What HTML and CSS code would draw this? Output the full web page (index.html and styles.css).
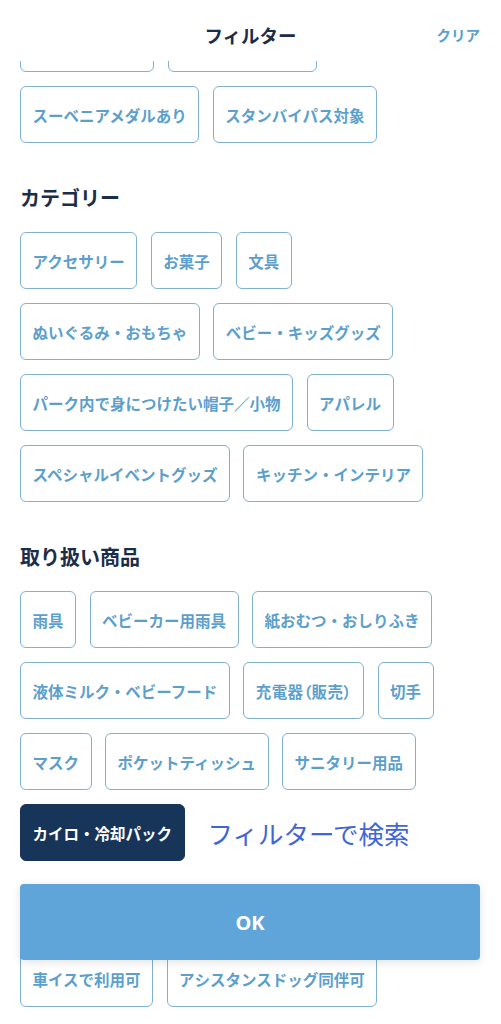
FILE: index.html
```html
<!DOCTYPE html>
<html lang="ja">
<head>
<meta charset="utf-8">
<title>フィルター</title>
<link rel="stylesheet" href="styles.css">
</head>
<body>
<div class="screen">
  <header class="header">
    <h1 class="title">フィルター</h1>
    <button class="clear">クリア</button>
  </header>
  <main class="viewport">
    <div class="content">
      <section class="section">
        <div class="chips">
          <span class="chip chip-blank chip-w1"></span>
          <span class="chip chip-blank chip-w2"></span>
          <span class="chip">スーベニアメダルあり</span>
          <span class="chip">スタンバイパス対象</span>
        </div>
      </section>
      <section class="section">
        <h2 class="heading">カテゴリー</h2>
        <div class="chips">
          <span class="chip">アクセサリー</span>
          <span class="chip">お菓子</span>
          <span class="chip">文具</span>
          <span class="chip">ぬいぐるみ・おもちゃ</span>
          <span class="chip">ベビー・キッズグッズ</span>
          <span class="chip">パーク内で身につけたい帽子／小物</span>
          <span class="chip">アパレル</span>
          <span class="chip">スペシャルイベントグッズ</span>
          <span class="chip">キッチン・インテリア</span>
        </div>
      </section>
      <section class="section">
        <h2 class="heading">取り扱い商品</h2>
        <div class="chips">
          <span class="chip">雨具</span>
          <span class="chip">ベビーカー用雨具</span>
          <span class="chip">紙おむつ・おしりふき</span>
          <span class="chip">液体ミルク・ベビーフード</span>
          <span class="chip chip-palt">充電器（販売）</span>
          <span class="chip">切手</span>
          <span class="chip">マスク</span>
          <span class="chip">ポケットティッシュ</span>
          <span class="chip">サニタリー用品</span>
          <span class="chip chip-active">カイロ・冷却パック</span>
          <span class="search-label">フィルターで検索</span>
        </div>
      </section>
      <section class="section">
        <div class="heading heading-spacer"></div>
        <div class="chips">
          <span class="chip">車イスで利用可</span>
          <span class="chip">アシスタンスドッグ同伴可</span>
        </div>
      </section>
    </div>
  </main>
  <footer class="footer">
    <button class="ok">OK</button>
  </footer>
</div>
</body>
</html>
```

FILE: styles.css
```css
* { box-sizing: border-box; }
html, body {
  margin: 0;
  padding: 0;
  background: #ffffff;
}
body {
  font-family: "Noto Sans CJK JP", "Noto Sans", sans-serif;
  color: #1b2d49;
}
.screen {
  position: relative;
  width: 501px;
  height: 1024px;
  display: flex;
  flex-direction: column;
  overflow: hidden;
}
.header {
  position: relative;
  z-index: 2;
  height: 61px;
  flex: none;
  background: #ffffff;
  display: flex;
  align-items: center;
  justify-content: center;
}
.title {
  margin: 0;
  font-size: 18.5px;
  font-weight: 700;
  color: #1b2d49;
  line-height: 26px;
  padding-top: 8px;
}
.clear {
  position: absolute;
  right: 21px;
  top: 24px;
  border: 0;
  background: none;
  padding: 0;
  font-family: inherit;
  font-size: 14.5px;
  font-weight: 700;
  color: #5d9fcc;
  line-height: 22px;
}
.viewport {
  flex: 1;
  overflow: hidden;
}
.content {
  margin-top: -46px;
  padding: 0 20px;
}
.section {
  margin-bottom: 41px;
}
.heading {
  margin: 0 0 20px;
  font-size: 20px;
  font-weight: 700;
  line-height: 28px;
  color: #1b2d49;
}
.heading-spacer {
  height: 28px;
}
.chips {
  display: flex;
  flex-wrap: wrap;
  align-items: center;
  column-gap: 13.5px;
  row-gap: 14px;
}
.chip {
  display: inline-flex;
  align-items: center;
  height: 57px;
  padding: 0 11.5px;
  border: 1px solid #80b1d1;
  border-radius: 6px;
  font-size: 15.5px;
  font-weight: 700;
  color: #5d9fcc;
  white-space: nowrap;
  background: #ffffff;
}
.chip-w1 { width: 134px; }
.chip-w2 { width: 149px; }
.chip-palt {
  font-feature-settings: "palt";
  letter-spacing: 0.4px;
}
.chip-active {
  background: #173459;
  border-color: #173459;
  color: #ffffff;
}
.search-label {
  margin-left: 9.5px;
  font-size: 25.5px;
  font-weight: 400;
  color: #3f66d6;
  line-height: 32px;
}
.footer {
  position: absolute;
  left: 20px;
  right: 21px;
  top: 884px;
  z-index: 3;
}
.ok {
  width: 100%;
  height: 76px;
  border: 0;
  border-radius: 4px;
  background: #5fa5d9;
  color: #ffffff;
  font-family: "Noto Sans", "Noto Sans CJK JP", sans-serif;
  font-size: 20px;
  font-weight: 700;
  box-shadow: 0 2px 10px rgba(0, 0, 0, 0.12);
}
```
